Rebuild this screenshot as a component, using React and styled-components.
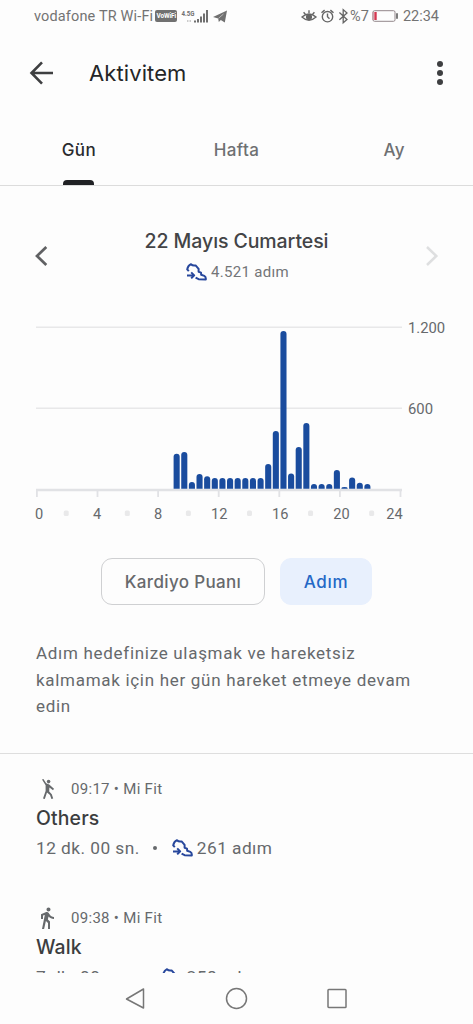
import styled, { createGlobalStyle } from "styled-components";

const GlobalStyle = createGlobalStyle`
  * {
    box-sizing: border-box;
  }
  body {
    margin: 0;
    background: #fdfdfd;
    font-family: Roboto, "Liberation Sans", sans-serif;
    color: #66696c;
  }
  svg {
    display: block;
    flex-shrink: 0;
  }
`;

const Screen = styled.div`
  display: flex;
  flex-direction: column;
  width: 473px;
  height: 1024px;
  overflow: hidden;
`;

const StatusBar = styled.div`
  display: flex;
  justify-content: space-between;
  align-items: center;
  height: 32px;
  padding: 0 34px 0 34px;
  font-size: 14.5px;
  color: #737373;
`;

const StatusGroup = styled.div`
  display: flex;
  align-items: center;
`;

const Carrier = styled.span`
  letter-spacing: 0.15px;
  white-space: nowrap;
`;

const WifiBadge = styled.span`
  margin-left: 2px;
  width: 22px;
  height: 12px;
  border-radius: 2px;
  background: #717171;
  color: white;
  font-size: 6.4px;
  font-weight: 700;
  line-height: 12px;
  letter-spacing: -0.1px;
  text-align: center;
`;

const Battery = styled.span`
  margin: 0 4px 0 3px;
`;

const Header = styled.div`
  display: flex;
  align-items: center;
  height: 82px;
  padding: 0 25px 0 29px;
`;

const Title = styled.h1`
  flex: 1;
  margin: 0 0 0 34px;
  font-family: Inter, sans-serif;
  font-size: 22px;
  font-weight: 400;
  letter-spacing: 0.1px;
  color: #242527;
`;

const Tabs = styled.div`
  display: grid;
  grid-template-columns: repeat(3, 157.67px);
  height: 72px;
  border-bottom: 1px solid #dcdcdc;
`;

const Tab = styled.div`
  display: flex;
  flex-direction: column;
  align-items: center;
  justify-content: space-between;
  padding-top: 25px;
  font-family: Inter, sans-serif;
  font-size: 17px;
  line-height: 22px;
  font-weight: 500;
  letter-spacing: 0.4px;
  color: ${(props) => (props.$active ? "#2a2b2d" : "#6e7072")};
`;

const TabLine = styled.div`
  width: 31px;
  height: 5px;
  border-radius: 4px 4px 0 0;
  background: #202124;
`;

const DayPicker = styled.div`
  display: flex;
  align-items: center;
  justify-content: space-between;
  height: 60px;
  margin-top: 40px;
  padding: 0 34px;
`;

const Day = styled.div`
  display: flex;
  flex-direction: column;
  align-items: center;
  padding-top: 3px;
`;

const DayName = styled.h2`
  margin: 0;
  font-family: Inter, sans-serif;
  font-size: 19.5px;
  line-height: 28px;
  font-weight: 500;
  letter-spacing: -0.08px;
  color: #434446;
`;

const DaySteps = styled.div`
  display: flex;
  align-items: center;
  gap: 4px;
  height: 33px;
  padding-left: 2px;
  font-size: 15px;
  letter-spacing: 0.33px;
  color: #737578;
`;

const ChartArea = styled.div`
  height: 230px;
  margin-top: 24px;
  svg text {
    font-family: Roboto, sans-serif;
    fill: #66696c;
  }
`;

const Chips = styled.div`
  display: flex;
  justify-content: center;
  gap: 15px;
  margin-top: 18px;
`;

const Chip = styled.button`
  width: ${(props) => props.$width};
  height: 47px;
  padding: 0;
  border: 1px solid ${(props) => (props.$active ? "#e8f0fd" : "#cfd0d2")};
  border-radius: 11px;
  background: ${(props) => (props.$active ? "#e8f0fd" : "transparent")};
  color: ${(props) => (props.$active ? "#2468c6" : "#67696c")};
  font-family: Inter, sans-serif;
  font-size: 17px;
  font-weight: 500;
  letter-spacing: ${(props) => (props.$active ? "0.7px" : "0.35px")};
`;

const Advice = styled.p`
  margin: 35px 36px 0;
  height: 113px;
  font-size: 17px;
  line-height: 26.7px;
  letter-spacing: 0.7px;
  white-space: nowrap;
`;

const Activities = styled.div`
  flex: 1;
  min-height: 0;
  overflow: hidden;
  border-top: 1px solid #dedede;
  padding: 22px 36px 0;
`;

const Activity = styled.div`
  height: 128.5px;
`;

const Source = styled.div`
  display: flex;
  align-items: center;
  gap: 11px;
  height: 26px;
  font-size: 15px;
  letter-spacing: 0.3px;
`;

const ActivityName = styled.h3`
  margin: 0;
  padding-top: 1px;
  font-family: Inter, sans-serif;
  font-size: 19.4px;
  line-height: 30px;
  font-weight: 500;
  letter-spacing: 0.15px;
  color: #3c3d3f;
`;

const Details = styled.div`
  display: flex;
  align-items: center;
  height: 30px;
  font-size: 17.3px;
  letter-spacing: 0.46px;
  white-space: pre;
`;

const Dot = styled.span`
  width: 4px;
  height: 4px;
  margin: 0 15px 0 13px;
  border-radius: 50%;
  background: #66696c;
`;

const StepsLabel = styled.span`
  margin-left: 4px;
`;

const NavBar = styled.div`
  display: flex;
  align-items: center;
  height: 51px;
  padding-left: 125px;
  gap: 78px;
`;

const slots = [
  453.7, 452, 482, 474, 476.3, 478, 478, 478, 478, 478, 478, 478, 464, 431,
  331, 473.5, 447, 423, 484, 484, 484, 470, 487, 477.5, 482.7, 484,
];

const hours = [0, 4, 8, 12, 16, 20, 24];

function StepIcon() {
  return (
    <svg width="21" height="18" viewBox="0 0 21 18" fill="none" stroke="#27479c" strokeWidth="2" strokeLinejoin="round">
      <path d="M2.8 8.2 L1.2 6.4 C1.6 4.3 2.9 2.2 5 1.2 C6.2 2.5 7.8 2.9 9.6 2.4 L12.6 5.8 V8.8 L15 9.6 L15.2 11.8 L18.3 12.9 C19.6 13.5 20 14.6 19.8 16.4 L12.6 16.2 L9.6 14.6" />
      <path d="M1 12.4 H8 M5.2 9.4 L8.2 12.4 L5.2 15.4" />
    </svg>
  );
}

function StatusIcons() {
  return (
    <svg width="49" height="20" viewBox="0 0 49 20" fill="none" stroke="#666" strokeWidth="1.4">
      <path d="M1 11 Q8 4.8 15 11 Q8 17.5 1 11Z M2.6 6.2 L4.3 8.2 M8 4.2 V7 M13.4 6.2 L11.7 8.2" />
      <circle cx="8" cy="11" r="2.4" fill="#666" />
      <circle cx="26.5" cy="10.7" r="5.2" />
      <path d="M26.5 7.5 V10.8 L28.5 12.8 M20.5 6.8 L23.6 4.1 M32.5 6.8 L29.4 4.1" />
      <path d="M38.4 6.6 L46 13.4 L42.2 16.8 V3.6 L46 7 L38.4 13.8" strokeWidth="1.3" />
    </svg>
  );
}

function Chart() {
  return (
    <ChartArea>
      <svg width="473" height="230" viewBox="0 310 473 230">
        <path d="M36 327.3 H402 M36 408.2 H402" stroke="#e8e8e9" strokeWidth="1.6" />
        <path d="M36 490 H402" stroke="#e1e2e5" strokeWidth="2.6" />
        {hours.map((hour) => (
          <rect key={hour} x={36 + hour * 15.15} y="490" width="1.8" height="7" fill="#e1e2e5" />
        ))}
        {slots.map((top, i) => (
          <path
            key={i}
            d={`M${173.6 + i * 7.63} 488.8 V${Math.min(top + 3, 488)} Q${173.6 + i * 7.63} ${top} ${176.65 + i * 7.63} ${top} Q${179.7 + i * 7.63} ${top} ${179.7 + i * 7.63} ${Math.min(top + 3, 488)} V488.8Z`}
            fill="#1a4c9e"
          />
        ))}
        {hours.map((hour) => (
          <text key={hour} x={hour === 0 ? 39 : hour === 24 ? 394.5 : 36 + hour * 15.27} y="518.5" fontSize="14.6" textAnchor="middle">
            {hour}
          </text>
        ))}
        {[2, 6, 10, 14, 18, 22].map((hour) => (
          <rect key={hour} x={33.2 + hour * 15.27} y="510.5" width="5" height="5.5" rx="1.5" fill="#e9e9ea" />
        ))}
        <text x="408" y="332.7" fontSize="14.8">1.200</text>
        <text x="408" y="413.6" fontSize="14.8">600</text>
      </svg>
    </ChartArea>
  );
}

function App() {
  return (
    <Screen>
      <GlobalStyle />
      <StatusBar>
        <StatusGroup>
          <Carrier>vodafone TR Wi-Fi</Carrier>
          <WifiBadge>VoWiFi</WifiBadge>
          <svg width="52" height="20" viewBox="0 0 52 20" fill="#707070">
            <text x="4.5" y="10" fontSize="7" fontWeight="700" fontFamily="Roboto" textLength="13" lengthAdjust="spacingAndGlyphs">4.5G</text>
            <path d="M17 14.5h2V16.5h-2z M20 13h2v3.5h-2z M23 10.5h2v6h-2z M26 7.5h2v9h-2z M29 4h2v12.5h-2z" />
            <path d="M10 14h1.5v2H10z M12.5 14H14v2h-1.5z" fill="#ccc" />
            <path d="M36 11 L50 4.5 L47.8 16.5 L43.8 14 L41.8 16 L41.2 12.6Z" />
            <path d="M41.5 12.3 L46.5 8" stroke="#fdfdfd" strokeWidth=".5" />
          </svg>
        </StatusGroup>
        <StatusGroup>
          <StatusIcons />
          <span>%7</span>
          <Battery>
            <svg width="27" height="14" viewBox="0 0 27 14" fill="none">
              <rect x="1" y="1.7" width="22" height="10.6" rx="1.5" stroke="#93878b" />
              <path d="M1 3 V11" stroke="#c58b95" />
              <path d="M3.5 3 V11" stroke="#d5374f" strokeWidth="2.4" />
              <path d="M25 4.2 V9.8" stroke="#666" strokeWidth="1.7" />
            </svg>
          </Battery>
          <span>22:34</span>
        </StatusGroup>
      </StatusBar>

      <Header>
        <svg width="26" height="26" viewBox="0 0 26 26" fill="none" stroke="#3e3f41" strokeWidth="2.6">
          <path d="M24 13 H3 M13 2.3 L2.5 13 L13 23.7" />
        </svg>
        <Title>Aktivitem</Title>
        <svg width="16" height="28" viewBox="0 0 16 28" fill="#3e3f41">
          <circle cx="8" cy="5" r="3" />
          <circle cx="8" cy="14" r="3" />
          <circle cx="8" cy="23" r="3" />
        </svg>
      </Header>

      <Tabs>
        <Tab $active>
          Gün
          <TabLine />
        </Tab>
        <Tab>Hafta</Tab>
        <Tab>Ay</Tab>
      </Tabs>

      <DayPicker>
        <svg width="14" height="22" viewBox="0 0 14 22" fill="none" stroke="#606163" strokeWidth="2.7">
          <path d="M12.3 2 L3 11 L12.3 20" />
        </svg>
        <Day>
          <DayName>22 Mayıs Cumartesi</DayName>
          <DaySteps>
            <StepIcon />
            4.521 adım
          </DaySteps>
        </Day>
        <svg width="14" height="22" viewBox="0 0 14 22" fill="none" stroke="#dedfe0" strokeWidth="2.5">
          <path d="M2 2 L11.3 11 L2 20" />
        </svg>
      </DayPicker>

      <Chart />

      <Chips>
        <Chip $width="164px">Kardiyo Puanı</Chip>
        <Chip $width="92px" $active>
          Adım
        </Chip>
      </Chips>

      <Advice>
        Adım hedefinize ulaşmak ve hareketsiz
        <br />
        kalmamak için her gün hareket etmeye devam
        <br />
        edin
      </Advice>

      <Activities>
        <Activity>
          <Source>
            <svg width="24" height="24" viewBox="0 0 24 24" fill="#66696c">
              <path d="M6 2.6 L7.4 2 L10.2 6.2 L13.2 7.6 L18 11.8 L17 13.2 L13.4 10.4 L13.2 14.6 L15.8 17.2 L17.2 21.6 L15.4 22 L14 18 L11 15.6 L8.8 22 L7 21.6 L9.6 14 V8.2Z" />
              <circle cx="12.6" cy="4.6" r="1.8" />
            </svg>
            09:17 • Mi Fit
          </Source>
          <ActivityName>Others</ActivityName>
          <Details>
            12 dk. 00 sn.
            <Dot />
            <StepIcon />
            <StepsLabel>261 adım</StepsLabel>
          </Details>
        </Activity>
        <Activity>
          <Source>
            <svg width="24" height="24" viewBox="1 0 24 24" fill="#66696c">
              <path d="M13.5 5.5c1.1 0 2-.9 2-2s-.9-2-2-2-2 .9-2 2 .9 2 2 2zM9.8 8.9L7 23h2.1l1.8-8 2.1 2v6h2v-7.5l-2.1-2 .6-3C14.8 12 16.8 13 19 13v-2c-1.9 0-3.5-1-4.3-2.4l-1-1.6c-.4-.6-1-1-1.7-1-.3 0-.5.1-.8.1L6 8.3V13h2V9.6l1.8-.7" />
            </svg>
            09:38 • Mi Fit
          </Source>
          <ActivityName>Walk</ActivityName>
          <Details>
            7 dk. 00 sn.
            <Dot />
            <StepIcon />
            <StepsLabel>258 adım</StepsLabel>
          </Details>
        </Activity>
      </Activities>

      <NavBar>
        <svg width="22" height="24" viewBox="0 0 22 24" fill="none" stroke="#777" strokeWidth="1.5" strokeLinejoin="round">
          <path d="M18.5 2 V21 L1.5 12Z" />
        </svg>
        <svg width="24" height="24" viewBox="0 0 24 24" fill="none" stroke="#777" strokeWidth="1.5">
          <circle cx="11.5" cy="11.5" r="10" />
        </svg>
        <svg width="22" height="24" viewBox="0 0 22 24" fill="none" stroke="#777" strokeWidth="1.5">
          <rect x="1" y="2.5" width="18" height="18" rx="0.8" />
        </svg>
      </NavBar>
    </Screen>
  );
}

export default App;
